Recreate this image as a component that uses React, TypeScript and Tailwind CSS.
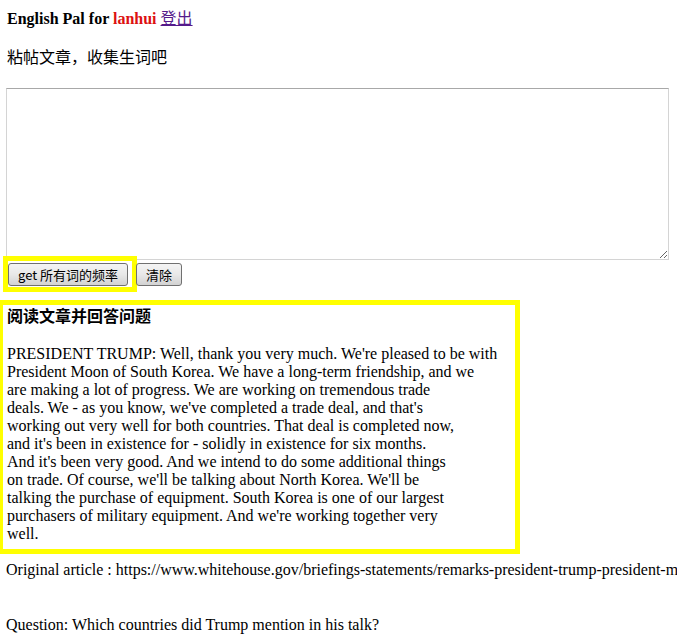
import React from "react";

const SERIF = "font-['Liberation_Serif','Noto_Sans_CJK_SC',serif]";

const ARTICLE = [
  "PRESIDENT TRUMP: Well, thank you very much. We're pleased to be with",
  "President Moon of South Korea. We have a long-term friendship, and we",
  "are making a lot of progress. We are working on tremendous trade",
  "deals. We - as you know, we've completed a trade deal, and that's",
  "working out very well for both countries. That deal is completed now,",
  "and it's been in existence for - solidly in existence for six months.",
  "And it's been very good. And we intend to do some additional things",
  "on trade. Of course, we'll be talking about North Korea. We'll be",
  "talking the purchase of equipment. South Korea is one of our largest",
  "purchasers of military equipment. And we're working together very",
  "well.",
];

function GrayButton({ children }: { children: React.ReactNode }) {
  return (
    <button
      type="button"
      className="h-[23px] rounded-[3px] border border-[#707070] bg-gradient-to-b from-[#f4f4f4] via-[#e8e8e8] to-[#d2d2d2] px-[9px] font-['Noto_Sans_CJK_SC','Liberation_Sans',sans-serif] text-[13px] leading-[21px] text-black"
    >
      {children}
    </button>
  );
}

export default function App() {
  return (
    <div className={`${SERIF} w-[677px] overflow-x-hidden bg-white text-[16px] leading-[18px] text-black`}>
      <p className="pl-[7px] pt-[10px] font-bold">
        English Pal for <span className="text-[#dd1111]">lanhui</span>{" "}
        <a href="#" className="font-normal text-[#551a8b] underline">
          登出
        </a>
      </p>

      <p className="mt-[21px] pl-[7px]">粘帖文章，收集生词吧</p>

      <textarea className="mt-[21px] ml-[6px] block h-[172px] w-[663px] border border-[#d4d4d4] border-t-[#a8a8a8] bg-white" />

      <div className="mt-[1px] flex items-start gap-[4px] pl-[8px]">
        <div className="pt-[2px] pr-[4px] pb-[1px] outline-[5px] outline-solid outline-[#ffff00]">
          <GrayButton>get 所有词的频率</GrayButton>
        </div>
        <div className="pt-[2px]">
          <GrayButton>清除</GrayButton>
        </div>
      </div>

      <div className="mt-[18px] ml-[3px] w-[512px] pt-[1px] pb-[6px] pl-[4px] outline-[5px] outline-solid outline-[#ffff00]">
        <h3 className="font-['Noto_Sans_CJK_SC',sans-serif] font-bold">阅读文章并回答问题</h3>
        <p className="mt-[21px]">
          {ARTICLE.map((line, i) => (
            <React.Fragment key={i}>
              {line}
              {i < ARTICLE.length - 1 && <br />}
            </React.Fragment>
          ))}
        </p>
      </div>

      <p className="mt-[12px] whitespace-nowrap pl-[6px]">
        Original article : https://www.whitehouse.gov/briefings-statements/remarks-president-trump-president-moon-republic-korea-bilateral-meeting/
      </p>

      <p className="mt-[37px] pl-[6px] pb-[20px]">Question: Which countries did Trump mention in his talk?</p>
    </div>
  );
}
